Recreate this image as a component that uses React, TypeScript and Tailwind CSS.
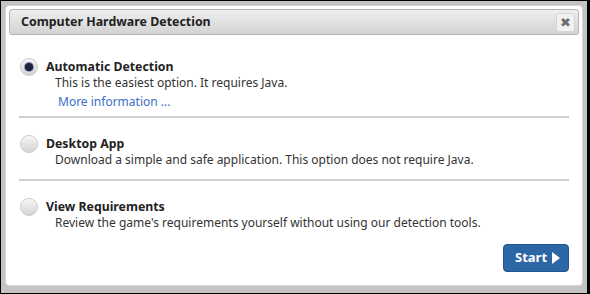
import React from 'react';

const options = [
  { id: 'auto', title: 'Automatic Detection', desc: 'This is the easiest option. It requires Java.', link: 'More information ...' },
  { id: 'app', title: 'Desktop App', desc: 'Download a simple and safe application. This option does not require Java.' },
  { id: 'req', title: 'View Requirements', desc: "Review the game's requirements yourself without using our detection tools." },
];

const Radio = ({ checked }: { checked: boolean }) => (
  <div className="w-[18px] h-[18px] shrink-0 rounded-full border border-[#cacaca] bg-gradient-to-b from-[#f6f6f6] to-[#d4d4d4] flex items-center justify-center shadow-[inset_0_1px_1px_rgba(255,255,255,0.8)]">
    {checked && <div className="w-[8px] h-[8px] rounded-full bg-[#1b2440] ring-1 ring-[#8a93a8]" />}
  </div>
);

export default function App() {
  return (
    <div className="w-[590px] h-[294px] bg-black p-[1px] pr-[3px] overflow-hidden">
      <div className="w-full h-full bg-[#c4c4c4] pt-[4px] pl-[4px]" style={{ fontFamily: '"Noto Sans", "DejaVu Sans", sans-serif' }}>
        <div className="w-[578px] h-[281px] bg-white rounded-[4px] border border-[#d6d6d6] p-[3px] flex flex-col">
          {/* header */}
          <div className="h-[26px] shrink-0 rounded-[3px] border border-[#b4b4b4] bg-gradient-to-b from-[#efefef] to-[#d3d3d3] flex items-center justify-between pl-[11px] pr-[3px]">
            <span className="text-[12.4px] font-bold text-[#222]">Computer Hardware Detection</span>
            <div className="w-[19px] h-[19px] rounded-[3px] border border-[#d4d4d4] bg-[#f2f2f2] flex items-center justify-center text-[13px] leading-none text-[#6f6f6f]">✖</div>
          </div>

          {/* body */}
          <div className="px-[10px] pt-[23px] flex flex-col">
            {options.map((o, i) => (
              <div key={o.id}>
                <div className="flex items-start gap-[8px] pl-[1px]">
                  <Radio checked={i === 0} />
                  <div className="flex flex-col text-[12px] leading-[16px] pt-[1px]">
                    <div className="font-bold text-[#222] text-[12.3px] leading-[16px]">{o.title}</div>
                    <div className="pl-[9px] text-[#333] leading-[16px]">{o.desc}</div>
                    {o.link && <div className="pl-[12px] mt-[3px] text-[#3a6fc8] leading-[16px]">{o.link}</div>}
                  </div>
                </div>
                {i < options.length - 1 && <div className={`h-[2px] bg-[#cfcfcf] ${i === 0 ? 'mt-[6px] mb-[17px]' : 'mt-[11px] mb-[17px]'}`} />}
              </div>
            ))}
            <div className="flex justify-end mt-[13px]">
              <button className="w-[66px] h-[28px] rounded-[4px] border border-[#23548c] bg-[#2d66a6] flex items-center justify-between pl-[11px] pr-[7px] text-white text-[13px] font-bold">
                Start
                <svg width="10" height="14" viewBox="0 0 10 14"><path d="M1 1 L9 7 L1 13 Z" fill="#fff" /></svg>
              </button>
            </div>
          </div>
        </div>
      </div>
    </div>
  );
}
